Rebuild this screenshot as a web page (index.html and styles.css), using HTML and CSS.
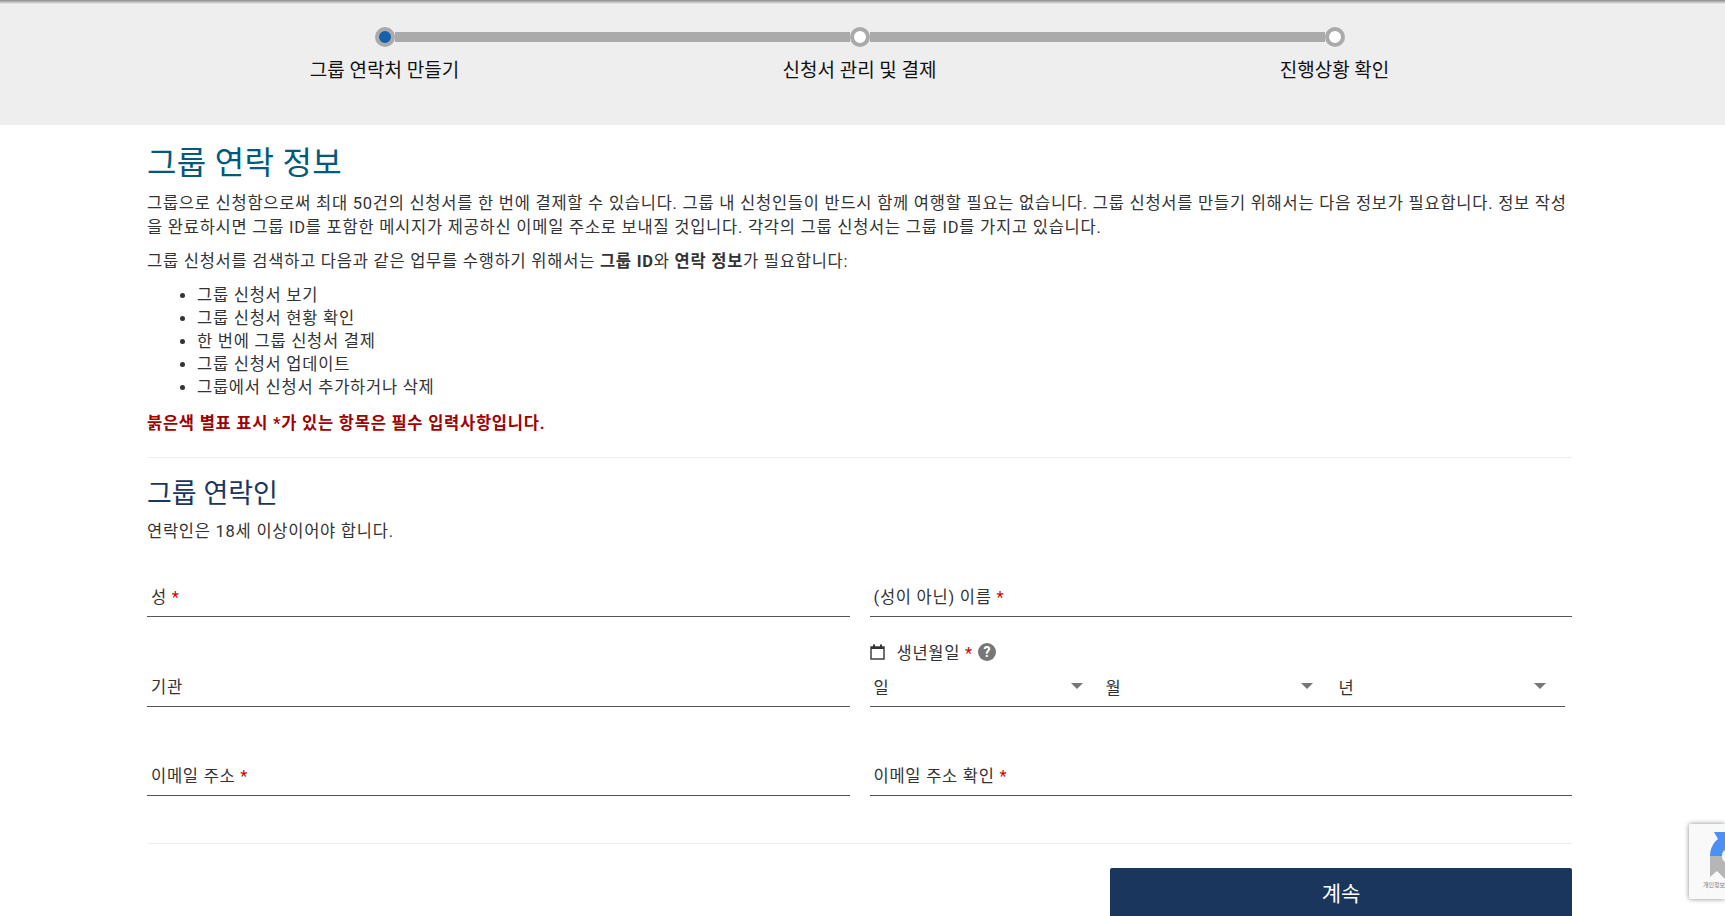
FILE: index.html
```html
<!DOCTYPE html>
<html lang="ko">
<head>
    <meta charset="UTF-8"/>
    <meta name="viewport" content="width=device-width, initial-scale=1.0"/>
    <title>그룹 연락 정보</title>
    <link rel="stylesheet" href="styles.css">
</head>
<body>
<div class="steps-band">
    <div class="steps">
        <div class="step">
            <div class="track"><span class="seg seg-none"></span><span class="dot dot-active"></span><span class="seg"></span></div>
            <div class="step-label">그룹 연락처 만들기</div>
        </div>
        <div class="step">
            <div class="track"><span class="seg"></span><span class="dot"></span><span class="seg"></span></div>
            <div class="step-label">신청서 관리 및 결제</div>
        </div>
        <div class="step">
            <div class="track"><span class="seg"></span><span class="dot"></span><span class="seg seg-none"></span></div>
            <div class="step-label">진행상황 확인</div>
        </div>
    </div>
</div>

<div class="container">
    <h1>그룹 연락 정보</h1>
    <p class="intro">그룹으로 신청함으로써 최대 50건의 신청서를 한 번에 결제할 수 있습니다. 그룹 내 신청인들이 반드시 함께 여행할 필요는 없습니다. 그룹 신청서를 만들기 위해서는 다음 정보가 필요합니다. 정보 작성을 완료하시면 그룹 ID를 포함한 메시지가 제공하신 이메일 주소로 보내질 것입니다. 각각의 그룹 신청서는 그룹 ID를 가지고 있습니다.</p>
    <p class="lead">그룹 신청서를 검색하고 다음과 같은 업무를 수행하기 위해서는 <strong>그룹 ID</strong>와 <strong>연락 정보</strong>가 필요합니다:</p>
    <ul class="tasks">
        <li>그룹 신청서 보기</li>
        <li>그룹 신청서 현황 확인</li>
        <li>한 번에 그룹 신청서 결제</li>
        <li>그룹 신청서 업데이트</li>
        <li>그룹에서 신청서 추가하거나 삭제</li>
    </ul>
    <p class="required-note">붉은색 별표 표시 *가 있는 항목은 필수 입력사항입니다.</p>
    <hr class="rule rule-top">
    <h2>그룹 연락인</h2>
    <p class="age-note">연락인은 18세 이상이어야 합니다.</p>

    <form class="form-grid">
        <div class="field"><label>성 <span class="req">*</span></label></div>
        <div class="field"><label>(성이 아닌) 이름 <span class="req">*</span></label></div>
        <div class="field"><label>기관</label></div>
        <div class="date-field">
            <div class="date-label">
                <svg class="cal" width="15" height="16" viewBox="0 0 15 16" aria-hidden="true">
                    <rect x="1" y="3" width="13" height="12" fill="none" stroke="#333" stroke-width="1.4"/>
                    <rect x="1" y="3" width="13" height="2" fill="#333"/>
                    <rect x="3" y="0.5" width="2" height="4" fill="#333"/>
                    <rect x="10" y="0.5" width="2" height="4" fill="#333"/>
                </svg>
                <span>생년월일 <span class="req">*</span></span>
                <span class="help">?</span>
            </div>
            <div class="date-selects">
                <div class="date-part date-day">일<span class="caret"></span></div>
                <div class="date-part date-month">월<span class="caret"></span></div>
                <div class="date-part date-year">년<span class="caret"></span></div>
            </div>
        </div>
        <div class="field"><label>이메일 주소 <span class="req">*</span></label></div>
        <div class="field"><label>이메일 주소 확인 <span class="req">*</span></label></div>
    </form>

    <hr class="rule rule-bottom">
    <div class="actions">
        <button class="continue" type="button">계속</button>
    </div>
</div>

<div class="recaptcha">
    <svg class="recaptcha-logo" width="15" height="48" viewBox="0 0 15 48" aria-hidden="true">
        <path d="M0 24C0 17 3 11 8 7L4 0H15V18C13 19 12 21 12 24Z" fill="#4a90f5"/>
        <path d="M0 24H12C12 27 13 29 15 30V47L7 39L0 45Z" fill="#b6b6b6"/>
    </svg>
    <div class="recaptcha-text">개인정보</div>
</div>
</body>
</html>
```

FILE: styles.css
```css
* {
    box-sizing: border-box;
}

html, body {
    height: 100%;
}

body {
    margin: 0;
    overflow: hidden;
    position: relative;
    font-family: Roboto, "Noto Sans CJK KR", sans-serif;
    font-size: 16.5px;
    letter-spacing: 0.75px;
    color: #333;
    background-color: #fff;
}

.steps-band {
    height: 125px;
    background: linear-gradient(#8a8a8a, #eee 4px);
    padding: 27px 153px 0 147px;
}

.steps {
    display: grid;
    grid-template-columns: repeat(3, 1fr);
}

.track {
    display: flex;
    align-items: center;
    height: 20px;
}

.seg {
    flex: 1;
    height: 10px;
    background-color: #aaa;
}

.seg-none {
    background-color: transparent;
}

.dot {
    width: 20px;
    height: 20px;
    border: 4px solid #aaa;
    border-radius: 50%;
    background-color: #fff;
}

.dot-active {
    background-color: #1560ab;
}

.step-label {
    margin-top: 11px;
    text-align: center;
    font-size: 19px;
    letter-spacing: 0;
    line-height: 26px;
    color: #111;
}

.container {
    width: 1425px;
    margin-left: 147px;
}

h1 {
    margin: 18px 0 0;
    font-size: 32px;
    font-weight: 400;
    letter-spacing: 0.3px;
    line-height: 40px;
    color: #005a7c;
}

p {
    margin: 0;
    line-height: 24px;
}

.intro {
    margin-top: 9px;
}

.lead {
    margin-top: 10px;
}

.tasks {
    margin: 10px 0 0;
    padding-left: 50px;
    line-height: 23px;
}

.required-note {
    margin-top: 12.5px;
    color: #a00000;
    font-weight: 700;
}

.rule {
    margin: 0;
    border: 0;
    border-top: 1px solid #eee;
}

.rule-top {
    margin-top: 21.5px;
}

h2 {
    margin: 19px 0 0;
    font-size: 27px;
    font-weight: 400;
    letter-spacing: 0;
    line-height: 34px;
    color: #1a365d;
}

.age-note {
    margin-top: 9px;
}

.form-grid {
    display: grid;
    grid-template-columns: 1fr 1fr;
    grid-template-rows: 40px 90px 89px;
    column-gap: 20px;
    margin-top: 33px;
}

.field {
    align-self: end;
    height: 40px;
    padding: 9px 4px 0;
    border-bottom: 1px solid #555;
    line-height: 24px;
}

.req {
    color: #d00000;
}

.date-field {
    align-self: end;
}

.date-label {
    display: flex;
    align-items: center;
    height: 24px;
}

.cal {
    margin-right: 12px;
}

.help {
    display: inline-block;
    width: 18px;
    height: 18px;
    margin-left: 5px;
    border-radius: 50%;
    background-color: #777;
    color: #fff;
    font-size: 14px;
    font-weight: 700;
    letter-spacing: 0;
    line-height: 18px;
    text-align: center;
}

.date-selects {
    display: grid;
    grid-template-columns: 233px 233px 1fr;
    width: 695px;
    height: 43px;
    padding-top: 13px;
    border-bottom: 1px solid #555;
    line-height: 24px;
}

.date-part {
    display: flex;
    justify-content: space-between;
}

.date-day {
    padding: 0 20px 0 4px;
}

.date-month {
    padding: 0 23px 0 3px;
}

.date-year {
    padding: 0 19px 0 3px;
}

.caret {
    width: 0;
    height: 0;
    margin-top: 6px;
    border-left: 6px solid transparent;
    border-right: 6px solid transparent;
    border-top: 6px solid #777;
}

.rule-bottom {
    margin-top: 47px;
}

.actions {
    display: flex;
    justify-content: flex-end;
    margin-top: 24px;
}

.continue {
    width: 462px;
    height: 50px;
    padding-bottom: 3px;
    border: 0;
    border-radius: 2px;
    background-color: #1a365d;
    color: #fff;
    font-family: inherit;
    font-size: 21px;
}

/* badge sits over the page, flush with the window edge */
.recaptcha {
    position: absolute;
    left: 1689px;
    top: 824px;
    width: 36px;
    height: 75px;
    border-radius: 2px 0 0 2px;
    background-color: #f9f9f9;
    box-shadow: 0 0 5px #888;
    overflow: hidden;
}

.recaptcha-logo {
    position: absolute;
    left: 21px;
    top: 8px;
}

.recaptcha-text {
    position: absolute;
    left: 14px;
    top: 55px;
    font-size: 6px;
    letter-spacing: 0;
    line-height: 12px;
    color: #777;
    white-space: nowrap;
}
```
